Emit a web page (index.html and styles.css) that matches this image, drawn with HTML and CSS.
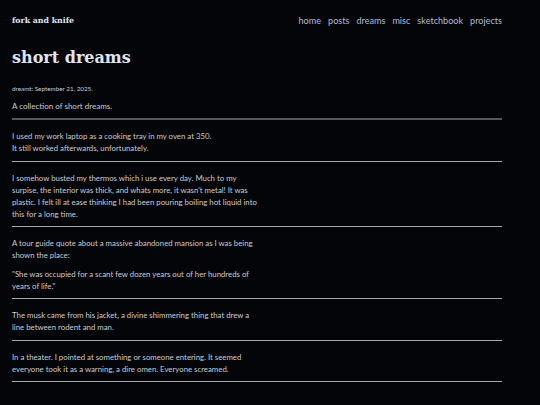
FILE: index.html
```html
<!DOCTYPE html>
<html lang="en">
<head>
  <meta charset="UTF-8" />
  <title>short dreams - fork and knife</title>
  <link rel="stylesheet" href="styles.css">
</head>
<body>

  <header class="site-header">
    <a class="site-name" href="#">fork and knife</a>
    <nav class="site-nav">
      <a href="#">home</a>
      <a href="#">posts</a>
      <a href="#">dreams</a>
      <a href="#">misc</a>
      <a href="#">sketchbook</a>
      <a href="#">projects</a>
    </nav>
  </header>

  <main class="post">
    <h1 class="post-title">short dreams</h1>
    <p class="post-date">dreamt: September 21, 2025.</p>
    <p class="post-intro">A collection of short dreams.</p>
    <hr class="first">

    <p>I used my work laptop as a cooking tray in my oven at 350.<br>It still worked afterwards, unfortunately.</p>
    <hr>

    <p>I somehow busted my thermos which i use every day. Much to my surpise, the interior was thick, and whats more, it wasn't metal! It was plastic. I felt ill at ease thinking I had been pouring boiling hot liquid into this for a long time.</p>
    <hr>

    <p>A tour guide quote about a massive abandoned mansion as I was being shown the place:</p>
    <p>"She was occupied for a scant few dozen years out of her hundreds of years of life."</p>
    <hr>

    <p>The musk came from his jacket, a divine shimmering thing that drew a line between rodent and man.</p>
    <hr>

    <p>In a theater. I pointed at something or someone entering. It seemed everyone took it as a warning, a dire omen. Everyone screamed.</p>
    <hr>
  </main>

</body>
</html>
```

FILE: styles.css
```css
html, body {
  margin: 0;
  padding: 0;
}

body {
  background: #040508;
  color: #c8ccd4;
  font-family: Lato, "Liberation Sans", sans-serif;
  font-size: 7.8px;
  padding: 0 38px 0 12px;
}

a {
  text-decoration: none;
}

.site-header {
  display: flex;
  justify-content: space-between;
  align-items: center;
  height: 40px;
}

.site-name {
  font-family: "DejaVu Serif", serif;
  font-weight: bold;
  font-size: 7.8px;
  color: #dfe6f2;
}

.site-nav {
  display: flex;
  gap: 7px;
}

.site-nav a {
  color: #aebbd2;
  font-size: 9.1px;
}

.post-title {
  font-family: "DejaVu Serif", serif;
  font-weight: bold;
  font-size: 16px;
  color: #dfe6f2;
  margin: 8px 0 0;
}

.post-date {
  font-size: 6.3px;
  margin: 16px 0 0;
}

.post-intro {
  font-size: 8px;
  margin: 5px 0 0;
}

.post p {
  max-width: 249px;
  line-height: 12px;
}

.post p:not(.post-date):not(.post-intro) {
  margin: 6.5px 0;
}

hr {
  border: none;
  border-top: 1px solid #a6a8ad;
  margin: 0 0 10px;
}

hr.first {
  border-top: 2px solid #55575c;
  margin-top: 6px;
}
```
